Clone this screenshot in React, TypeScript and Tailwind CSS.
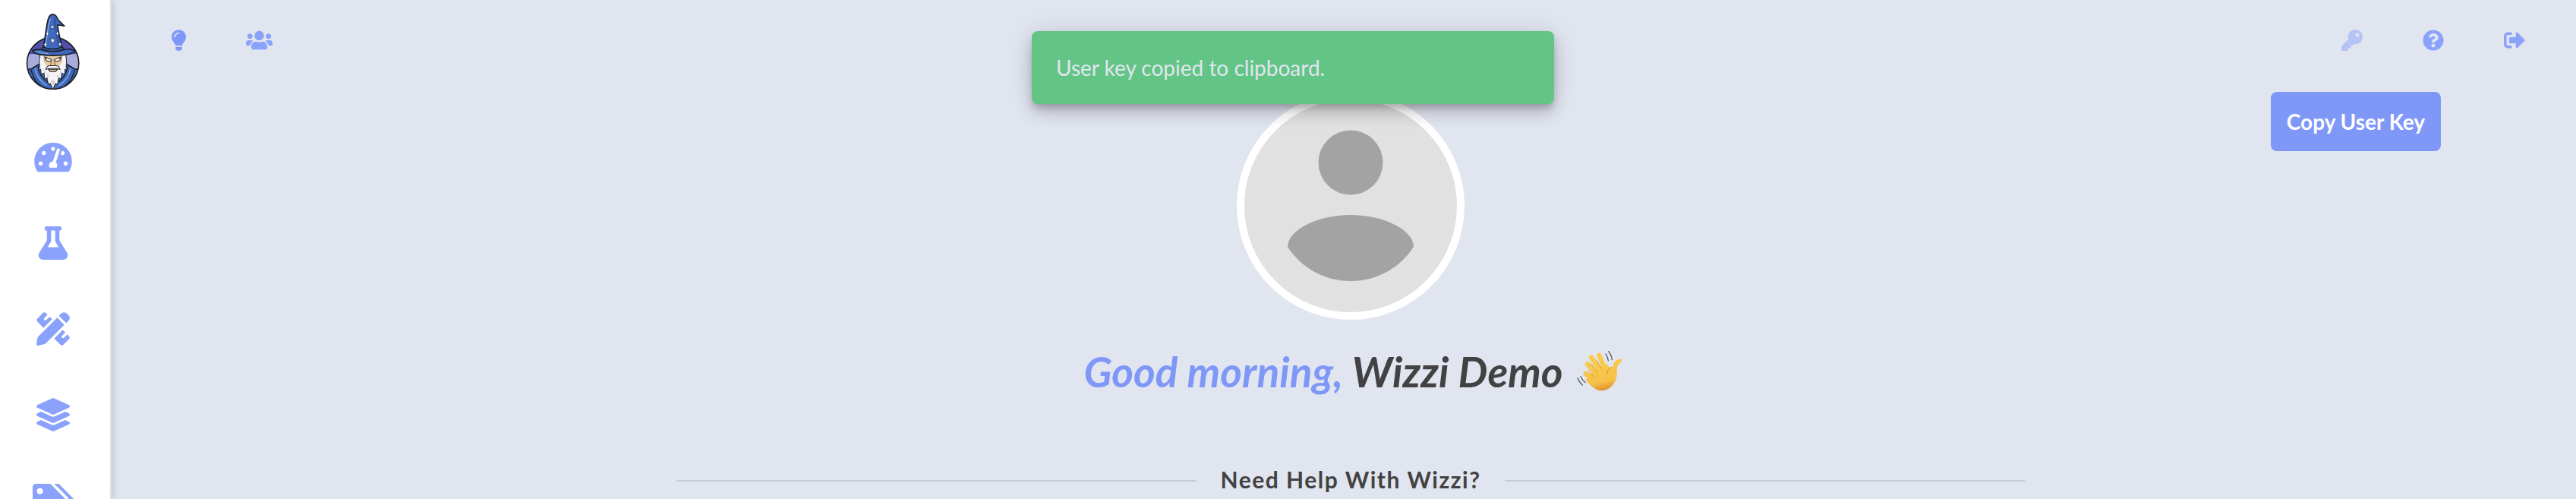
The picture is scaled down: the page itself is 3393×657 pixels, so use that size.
import type { ReactNode } from 'react'
import {
  FaFlask,
  FaKey,
  FaLayerGroup,
  FaLightbulb,
  FaQuestionCircle,
  FaSignOutAlt,
  FaTachometerAlt,
  FaTags,
  FaUsers,
} from 'react-icons/fa'

interface NavLinkProps {
  label: string
  children: ReactNode
}

function NavLink({ label, children }: NavLinkProps) {
  return (
    <a
      href="#"
      aria-label={label}
      className="flex h-[113px] shrink-0 items-center justify-center text-[#8aa2fb]"
    >
      {children}
    </a>
  )
}

function PencilRuler() {
  return (
    <svg viewBox="0 0 132 132" fill="currentColor" className="size-11" aria-hidden="true">
      <path d="M82 22L110 50 38 122Q35 126 30 127L5 132Q-1 132 0 126L4 102Q5 98 8 95Z" />
      <path d="M89 15L96 7Q108-5 120 5L127 12Q137 24 125 36L117 43Z" />
      <path d="M28 62L3 37Q-2 31 3 26L25 4Q31-2 37 3L44 10 31 23Q28 27 31 31 35 34 39 31L52 18 62 28Z" />
      <path d="M70 104L104 70 114 80 101 93Q98 97 101 101 105 104 109 101L122 88 129 95Q134 101 129 106L107 128Q101 134 95 129Z" />
    </svg>
  )
}

function WizardLogo() {
  return (
    <svg viewBox="16 22 214 302" className="h-[101px] w-[72px]" aria-hidden="true">
      <defs>
        <clipPath id="badge">
          <circle cx="122" cy="220" r="101" />
        </clipPath>
      </defs>
      {/* Badge and robe */}
      <g clipPath="url(#badge)">
        <rect x="16" y="110" width="214" height="214" fill="#a9addb" />
        <path d="M16 110h214v74H16Z" fill="#5350a8" />
        <path d="M16 246l22-4 26-16 18-10h80l18 10 26 16 24 4v84H16Z" fill="#3f66b8" stroke="#1d2027" strokeWidth="5" />
        <path d="M52 240q8 44 46 68M192 240q-8 44-46 68" fill="none" stroke="#7fa9e6" strokeWidth="5" />
        <path d="M36 246q10 48 52 74M208 246q-10 48-52 74M64 232q4 40 40 66M180 232q-4 40-40 66" fill="none" stroke="#1d2027" strokeWidth="4" />
        <path d="M26 262q14 36 44 56M218 262q-14 36-44 56" fill="none" stroke="#1d2027" strokeWidth="6" />
      </g>
      <circle cx="122" cy="220" r="102" fill="none" stroke="#1d2027" strokeWidth="5" />
      {/* Beard */}
      <path
        d="M72 186q-6 24-2 46l-4 14 8-2 2 20 11-5 3 24 9-5 5 26 8-4 10 24 10-24 8 4 5-26 9 5 3-24 11 5 2-20 8 2-4-14q4-22-2-46Z"
        fill="#f4f3f5"
        stroke="#2a2c33"
        strokeWidth="3"
      />
      <path d="M84 244l6 12 8 4 4 14 6-2M160 244l-6 12-8 4-4 14-6-2M114 288l8 20 8-20" fill="#cfcbd1" />
      {/* Face */}
      <path d="M86 184h72l-2 34-10 14H98l-10-14Z" fill="#e9cda0" />
      <path d="M86 186l12 8-4 24-8-6ZM158 186l-12 8 4 24 8-6Z" fill="#d3b084" />
      <path d="M90 196l26 9-3 7q-14 2-20-7ZM154 196l-26 9 3 7q14 2 20-7Z" fill="#fff" stroke="#25272e" strokeWidth="3" />
      <path d="M117 206l-5 22q10 8 20 0l-5-22" fill="#e2ba8a" stroke="#5f4a3d" strokeWidth="2" />
      <path d="M94 244q4-16 22-14h12q18-2 22 14-28-8-56 0Z" fill="#fff" stroke="#25272e" strokeWidth="3" />
      <path d="M104 244h36l-7 9h-22Z" fill="#d9b58a" stroke="#25272e" strokeWidth="3" />
      {/* Hat */}
      <path
        d="M83 168C90 140 93 86 103 48q6-22 22-20c10 2 14 12 18 22l24 23-27-4c4 32 14 72 20 99-18 12-60 12-77 0Z"
        fill="#4169be"
        stroke="#1d2027"
        strokeWidth="5"
        strokeLinejoin="round"
      />
      <path d="M128 34q8 18 6 34l4 24 14 68-8 6-14-80q-8-30-2-52Z" fill="#2f55a5" />
      <path d="M112 44C100 84 98 126 92 158" fill="none" stroke="#83ade8" strokeWidth="4" />
      <path d="M83 156q38 16 77 0l6 12q-44 20-89 0Z" fill="#35599f" stroke="#1d2027" strokeWidth="4" />
      <path
        d="M42 172q8-7 34-6 46 17 92 0 30-2 40 6-10 17-84 18-74-1-82-18Z"
        fill="#4169be"
        stroke="#1d2027"
        strokeWidth="5"
      />
      <path d="M54 173q20 8 50 9" fill="none" stroke="#83ade8" strokeWidth="4" />
      {/* Stars */}
      <path
        d="M121 119l3 7 8 1-6 5 2 8-7-4-7 4 2-8-6-5 8-1ZM120 69l3 5 6 1-5 4 1 6-5-3-6 3 2-6-5-4 6-1Z"
        fill="#fff"
        stroke="#23345f"
        strokeWidth="2"
      />
      <path d="M100 97l2 5 5 2-5 2-2 5-2-5-3-2 3-2ZM140 96l2 5 4 2-4 2-2 5-2-5-4-2 4-2ZM92 139l2 5 4 2-4 2-2 5-2-5-4-2 4-2ZM150 138l2 5 4 2-4 2-2 5-2-5-4-2 4-2Z" fill="#fff" />
    </svg>
  )
}

function Avatar() {
  return (
    <svg
      viewBox="0 0 280 280"
      className="size-[300px] rounded-full border-[10px] border-white bg-[#e1e1e1]"
      role="img"
      aria-label="Profile picture"
    >
      <circle cx="140" cy="83" r="42.5" fill="#a3a3a3" />
      <path d="M57 194C57 172 96 152 140 152s83 20 83 42c-17 26-46 45-83 45s-66-19-83-45Z" fill="#a3a3a3" />
    </svg>
  )
}

function WavingHand() {
  return (
    <svg viewBox="50 44 180 162" className="h-[54px] w-[60px]" role="img" aria-label="Waving hand">
      <defs>
        <linearGradient id="skin" gradientUnits="userSpaceOnUse" x1="130" y1="50" x2="160" y2="204">
          <stop offset="0" stopColor="#fbcd4b" />
          <stop offset="0.75" stopColor="#f6c14a" />
          <stop offset="1" stopColor="#d98a2b" />
        </linearGradient>
      </defs>
      <g fill="none" stroke="url(#skin)" strokeWidth="19" strokeLinecap="round">
        <path d="M138 61l22 54" />
        <path d="M107 69l38 60" />
        <path d="M92 96l38 46" />
        <path d="M85 134l36 30" />
      </g>
      <path
        d="M112 128l20-18 18-8 18-6 8 10q6 4 12 2 6-4 8-14c4-12 16-20 28-17 8 4 2 10-4 14-12 10-12 22-11 36 0 38-24 74-64 74-22 0-38-18-60-40l12-20Z"
        fill="url(#skin)"
      />
      <path
        d="M128 80l18 34M106 95l26 36M94 122l28 28M186 108q-16 10-18 28"
        fill="none"
        stroke="#d7962f"
        strokeWidth="3"
        strokeLinecap="round"
      />
      <path
        d="M164 56q8 12 10 26M175 46q12 14 14 33M53 151q6 16 19 28M65 145q6 14 18 24"
        fill="none"
        stroke="#55585e"
        strokeWidth="4"
        strokeLinecap="round"
      />
    </svg>
  )
}

export default function App() {
  return (
    <div className="flex h-screen overflow-hidden bg-[#e1e5f0] font-['Lato',sans-serif] text-[#424242]">
      <nav className="z-10 flex w-[147px] shrink-0 flex-col border-r-2 border-[#e0e0e0] bg-white pr-[5px] shadow-[2px_0_8px_rgba(0,0,0,0.15)]">
        <a href="#" aria-label="Wizzi home" className="flex h-[150px] shrink-0 justify-center pt-[17px]">
          <WizardLogo />
        </a>
        <NavLink label="Dashboard"><FaTachometerAlt className="h-11 w-[50px]" /></NavLink>
        <NavLink label="Experiments"><FaFlask className="size-11" /></NavLink>
        <NavLink label="Design"><PencilRuler /></NavLink>
        <NavLink label="Layers"><FaLayerGroup className="size-11" /></NavLink>
        <NavLink label="Tags"><FaTags className="h-11 w-[55px]" /></NavLink>
      </nav>

      <div className="flex min-w-0 flex-1 flex-col">
        <header className="flex h-[105px] shrink-0 items-center justify-between pr-[67px] pl-[79px] text-[#8aa2fb]">
          <div className="flex gap-[79px]">
            <a href="#" aria-label="Tips" className="text-[#7f98f8]"><FaLightbulb className="h-7 w-[19px]" /></a>
            <a href="#" aria-label="Team"><FaUsers className="h-7 w-[35px]" /></a>
          </div>
          <div className="flex gap-[79px]">
            <button type="button" aria-label="User key" className="opacity-50"><FaKey className="size-7" /></button>
            <a href="#" aria-label="Help"><FaQuestionCircle className="size-7" /></a>
            <a href="#" aria-label="Sign out"><FaSignOutAlt className="size-7" /></a>
          </div>
        </header>

        <main className="flex flex-col items-center pt-4 pl-[18px]">
          <Avatar />
          <h1 className="mt-[30px] flex items-center gap-[18px] pl-1.5 text-[55px] leading-[76px] font-bold italic">
            <span>
              <span className="text-[#7f98f8]">Good morning,</span> Wizzi Demo
            </span>
            <WavingHand />
          </h1>
          <div className="mt-[86px] flex w-[55%] items-center gap-8">
            <hr className="mt-1 flex-1 border-t-2 border-[#c7cbd6]" />
            <h2 className="text-[30px] leading-9 font-bold tracking-wider">Need Help With Wizzi?</h2>
            <hr className="mt-1 flex-1 border-t-2 border-[#c7cbd6]" />
          </div>
        </main>
      </div>

      <button
        type="button"
        className="absolute top-[121px] right-[178px] z-10 h-[78px] w-56 rounded-lg bg-[#7f98f8] text-[28px] font-bold text-white"
      >
        Copy User Key
      </button>

      <div className="pointer-events-none absolute inset-x-0 top-[41px] z-20 flex justify-center pl-[13px]">
        <div
          role="status"
          className="flex h-24 w-[688px] items-center rounded-lg bg-[#62c585] px-8 text-[28px] text-[#e1e5f0] shadow-[0_6px_10px_-2px_rgba(0,0,0,0.2),0_12px_20px_rgba(0,0,0,0.14),0_2px_36px_rgba(0,0,0,0.12)]"
        >
          User key copied to clipboard.
        </div>
      </div>
    </div>
  )
}
